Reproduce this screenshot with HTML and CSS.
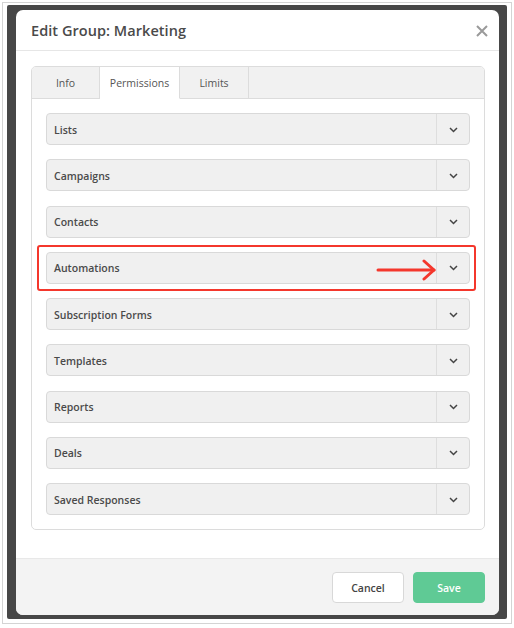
FILE: index.html
```html
<!DOCTYPE html>
<html>
<head>
<meta charset="utf-8">
<link rel="stylesheet" href="styles.css">
</head>
<body>
<div class="frame">
  <div class="backdrop">
    <div class="modal">
      <div class="modal-header">
        <h1 class="title">Edit Group: Marketing</h1>
        <svg class="close" width="12" height="12" viewBox="0 0 12 12"><path d="M1 1L11 11M11 1L1 11" stroke="#9a9a9a" stroke-width="2"/></svg>
      </div>
      <div class="modal-body">
        <div class="tabbox">
          <div class="tabs">
            <div class="tab tab-info">Info</div>
            <div class="tab tab-perm active">Permissions</div>
            <div class="tab tab-limits">Limits</div>
            <div class="tab-fill"></div>
          </div>
          <div class="panel">
            <div class="item"><span class="label">Lists</span><span class="toggle"><svg width="9" height="6" viewBox="0 0 9 6"><path d="M1 1L4.5 4.5L8 1" fill="none" stroke="#444" stroke-width="1.5"/></svg></span></div>
            <div class="item"><span class="label">Campaigns</span><span class="toggle"><svg width="9" height="6" viewBox="0 0 9 6"><path d="M1 1L4.5 4.5L8 1" fill="none" stroke="#444" stroke-width="1.5"/></svg></span></div>
            <div class="item"><span class="label">Contacts</span><span class="toggle"><svg width="9" height="6" viewBox="0 0 9 6"><path d="M1 1L4.5 4.5L8 1" fill="none" stroke="#444" stroke-width="1.5"/></svg></span></div>
            <div class="item highlighted"><span class="label">Automations</span><span class="toggle"><svg width="9" height="6" viewBox="0 0 9 6"><path d="M1 1L4.5 4.5L8 1" fill="none" stroke="#444" stroke-width="1.5"/></svg></span>
              <div class="hl-box"></div>
              <svg class="arrow" width="62" height="22" viewBox="0 0 62 22"><path d="M2 11H58" stroke="#f4372c" stroke-width="3" stroke-linecap="round"/><path d="M48 2L58 11L48 20" fill="none" stroke="#f4372c" stroke-width="3" stroke-linecap="round" stroke-linejoin="round"/></svg>
            </div>
            <div class="item"><span class="label">Subscription Forms</span><span class="toggle"><svg width="9" height="6" viewBox="0 0 9 6"><path d="M1 1L4.5 4.5L8 1" fill="none" stroke="#444" stroke-width="1.5"/></svg></span></div>
            <div class="item"><span class="label">Templates</span><span class="toggle"><svg width="9" height="6" viewBox="0 0 9 6"><path d="M1 1L4.5 4.5L8 1" fill="none" stroke="#444" stroke-width="1.5"/></svg></span></div>
            <div class="item"><span class="label">Reports</span><span class="toggle"><svg width="9" height="6" viewBox="0 0 9 6"><path d="M1 1L4.5 4.5L8 1" fill="none" stroke="#444" stroke-width="1.5"/></svg></span></div>
            <div class="item"><span class="label">Deals</span><span class="toggle"><svg width="9" height="6" viewBox="0 0 9 6"><path d="M1 1L4.5 4.5L8 1" fill="none" stroke="#444" stroke-width="1.5"/></svg></span></div>
            <div class="item"><span class="label">Saved Responses</span><span class="toggle"><svg width="9" height="6" viewBox="0 0 9 6"><path d="M1 1L4.5 4.5L8 1" fill="none" stroke="#444" stroke-width="1.5"/></svg></span></div>
          </div>
        </div>
      </div>
      <div class="modal-footer">
        <button class="btn btn-cancel">Cancel</button>
        <button class="btn btn-save">Save</button>
      </div>
    </div>
  </div>
</div>
</body>
</html>
```
FILE: styles.css
```css
* { box-sizing: border-box; }
html, body { margin: 0; padding: 0; background: #fff; }
body { font-family: "Open Sans", "Liberation Sans", sans-serif; color: #444; }

.frame {
  margin: 2px 2px 0 2px;
  width: 510px;
  height: 622px;
  border: 1px solid #d4d4d4;
  padding: 2px 4px 4px 4px;
}
.backdrop {
  background: #474747;
  height: 100%;
  padding: 5px 7px 2px 9px;
  border-radius: 2px;
}
.modal {
  background: #fff;
  border-radius: 7px;
  height: 605px;
  width: 483px;
  display: flex;
  flex-direction: column;
  overflow: hidden;
}
.modal-header {
  height: 41px;
  border-bottom: 1px solid #e6e6e6;
  display: flex;
  align-items: center;
  justify-content: space-between;
  padding: 0 11px 0 15px;
}
.title {
  margin: 0;
  font-size: 14.5px;
  font-weight: 600;
  color: #4a4a4a;
  letter-spacing: 0.05px;
}
.close { margin-top: 1px; }

.modal-body {
  flex: 1;
  padding: 15px 14px 0 15px;
}
.tabbox {
  border: 1px solid #dcdcdc;
  border-radius: 5px;
  height: 464px;
  overflow: hidden;
}
.tabs {
  display: flex;
  height: 32px;
  background: #f1f1f1;
}
.tab {
  font-size: 10.5px;
  color: #555;
  display: flex;
  align-items: center;
  justify-content: center;
  border-bottom: 1px solid #dcdcdc;
  border-right: 1px solid #dcdcdc;
  padding-top: 1px;
}
.tab-info { width: 68px; }
.tab-perm { width: 80px; }
.tab-limits { width: 69px; }
.tab.active { background: #fff; border-bottom-color: #fff; }
.tab-fill { flex: 1; border-bottom: 1px solid #dcdcdc; }

.panel {
  padding: 14px 14px 14px 14px;
  display: flex;
  flex-direction: column;
  gap: 14.25px;
}
.item {
  position: relative;
  height: 32px;
  background: #f0f0f0;
  border: 1px solid #d9d9d9;
  border-radius: 4px;
  display: flex;
  align-items: center;
}
.label {
  flex: 1;
  padding-left: 7px;
  padding-top: 1px;
  font-size: 10.5px;
  font-weight: 600;
  color: #4a4a4a;
}
.toggle {
  width: 33px;
  height: 100%;
  border-left: 1px solid #dedede;
  display: flex;
  align-items: center;
  justify-content: center;
  padding-top: 1px;
}
.hl-box {
  position: absolute;
  left: -10px;
  right: -7px;
  top: -8px;
  bottom: -8px;
  border: 2px solid #f4372c;
  border-radius: 3px;
}
.arrow {
  position: absolute;
  left: 329px;
  top: 6px;
}

.modal-footer {
  height: 57px;
  background: #f3f3f3;
  border-top: 1px solid #e8e8e8;
  display: flex;
  justify-content: flex-end;
  align-items: flex-start;
  gap: 9px;
  padding: 13px 14px 0 0;
}
.btn {
  width: 72px;
  height: 31px;
  border-radius: 4px;
  font-family: "Open Sans", "Liberation Sans", sans-serif;
  font-size: 10.5px;
  font-weight: 600;
}
.btn-cancel {
  background: #fff;
  border: 1px solid #d8d8d8;
  color: #444;
}
.btn-save {
  background: #5fca95;
  border: 1px solid #5fca95;
  color: #fff;
}
```
